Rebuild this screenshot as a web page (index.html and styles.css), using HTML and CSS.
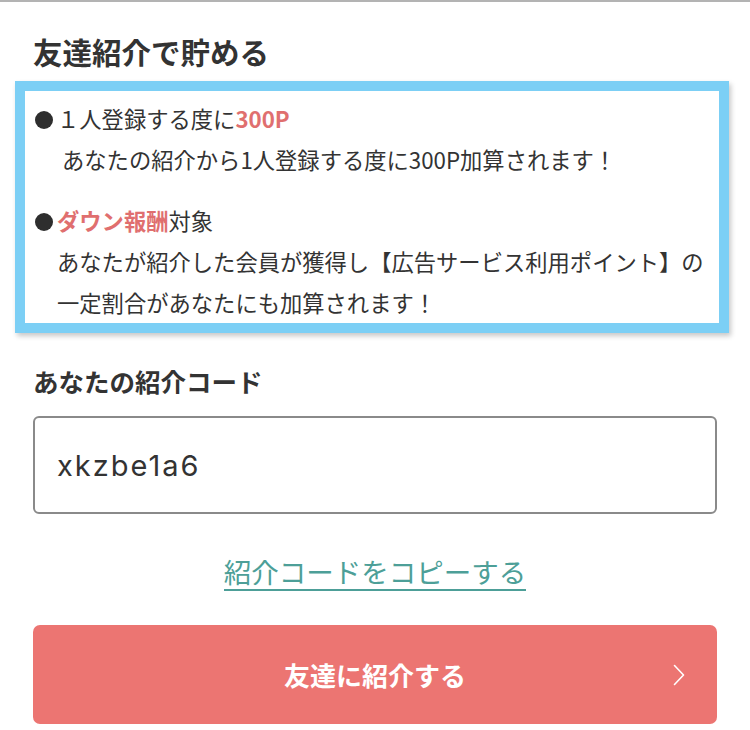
FILE: index.html
```html
<!DOCTYPE html>
<html lang="ja">
<head>
<meta charset="utf-8">
<link rel="stylesheet" href="styles.css">
</head>
<body>
<div class="page">
  <h2 class="title">友達紹介で貯める</h2>
  <div class="info">
    <div class="item">
      <p class="lead"><span class="dot"></span>１人登録する度に<span class="accent">300P</span></p>
      <p class="desc desc-shift">あなたの紹介から1人登録する度に300P加算されます！</p>
    </div>
    <div class="item">
      <p class="lead"><span class="dot"></span><span class="accent">ダウン報酬</span>対象</p>
      <p class="desc">あなたが紹介した会員が獲得し【広告サービス利用ポイント】の一定割合があなたにも加算されます！</p>
    </div>
  </div>
  <h3 class="label">あなたの紹介コード</h3>
  <div class="code">xkzbe1a6</div>
  <div class="copy-row"><a class="copy" href="#">紹介コードをコピーする</a></div>
  <button class="share">友達に紹介する
    <svg class="chev" width="12" height="22" viewBox="0 0 12 22"><path d="M1.5 1.5 L10.5 11 L1.5 20.5" fill="none" stroke="#fff" stroke-width="1.6" stroke-linecap="round" stroke-linejoin="round"/></svg>
  </button>
</div>
</body>
</html>
```
FILE: styles.css
```css
* { box-sizing: border-box; }
html, body { margin: 0; padding: 0; background: #fff; }
body {
  font-family: "Noto Sans CJK JP", "Noto Sans", sans-serif;
  color: #333;
  border-top: 2px solid #b3b3b3;
}
.page { padding: 0 33px; }
.title {
  margin: 0;
  padding-top: 30px;
  font-size: 29.5px;
  line-height: 38px;
  font-weight: 700;
  color: #333;
}
.info {
  margin: 11px -12px 0 -18px;
  border: 10px solid #7ccff5;
  padding: 7px 10px 0 10px;
  box-shadow: 2px 3px 5px rgba(0,0,0,0.22);
  background: #fff;
}
.item + .item { margin-top: 20px; }
.lead, .desc {
  margin: 0;
  font-size: 22.3px;
  line-height: 41px;
  color: #333;
}
.dot {
  display: inline-block;
  width: 18px;
  height: 18px;
  border-radius: 50%;
  background: #2e2e2e;
  margin: 0 4px 0 0;
  vertical-align: -1px;
}
.accent { color: #e06f6f; font-weight: 700; }
.desc { padding-left: 22px; }
.desc-shift { padding-left: 27px; }
.label {
  margin: 0;
  padding-top: 30px;
  font-size: 25.5px;
  line-height: 36px;
  font-weight: 700;
  color: #333;
}
.code {
  margin-top: 17px;
  height: 98px;
  border: 2px solid #8a8a8a;
  border-radius: 6px;
  padding: 0 22px;
  display: flex;
  align-items: center;
  font-family: "Inter", "Liberation Sans", sans-serif;
  font-size: 29px;
  letter-spacing: 2px;
  color: #333;
}
.copy-row {
  display: flex;
  justify-content: center;
  padding-top: 39px;
}
.copy {
  font-size: 27.5px;
  line-height: 36px;
  color: #4d9f98;
  text-decoration: none;
  border-bottom: 2px solid #4d9f98;
}
.share {
  margin-top: 34px;
  width: 100%;
  height: 99px;
  border: none;
  border-radius: 7px;
  background: #ec7572;
  color: #fff;
  font-family: inherit;
  font-size: 26px;
  font-weight: 700;
  display: flex;
  align-items: center;
  justify-content: center;
  position: relative;
}
.chev { position: absolute; right: 32px; top: 39px; }
```
